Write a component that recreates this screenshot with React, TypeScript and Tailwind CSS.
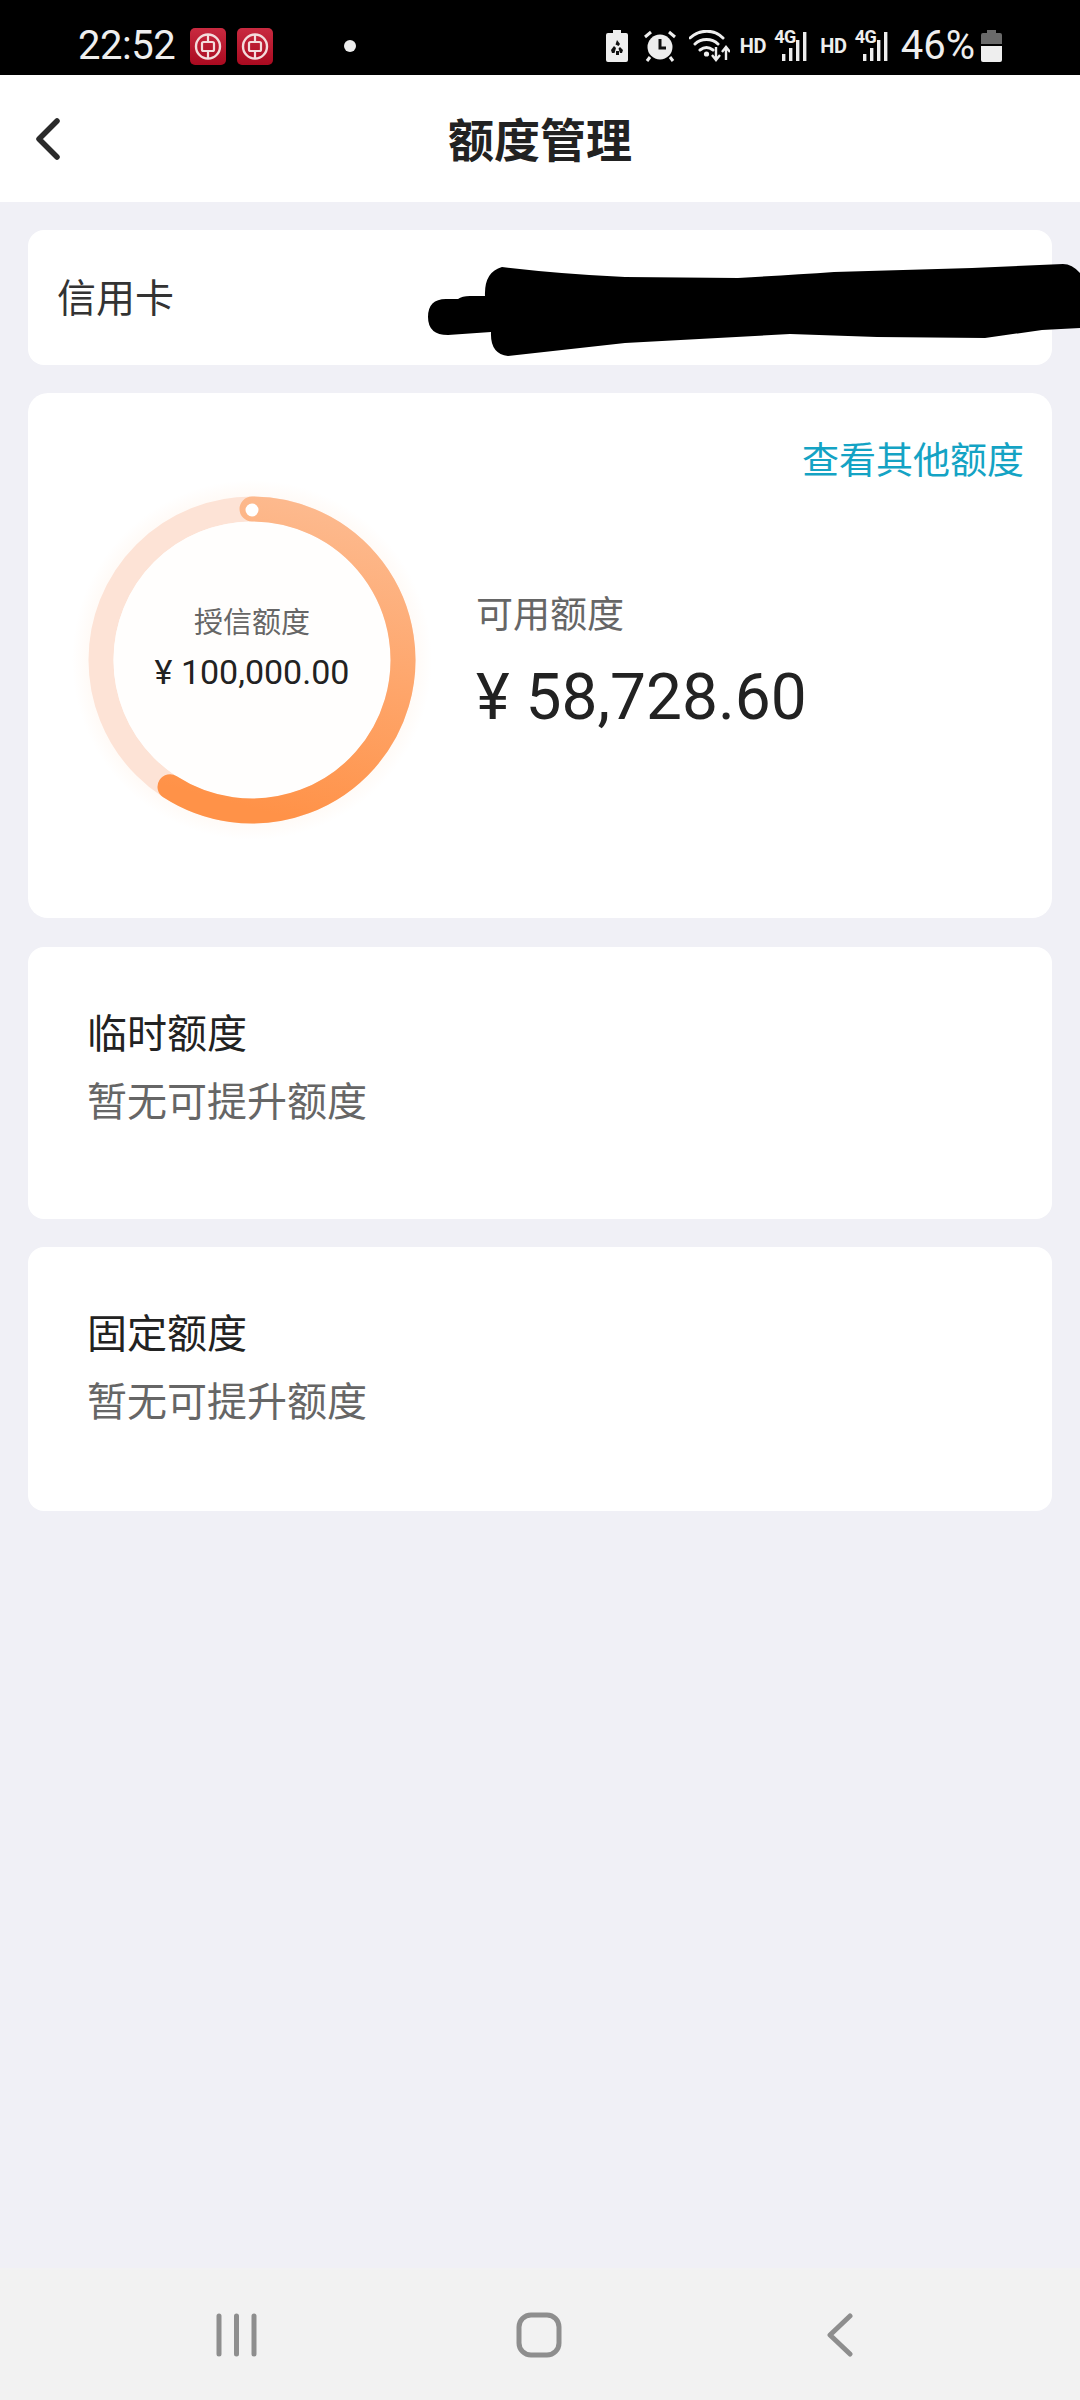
import React from 'react';

const FONT = 'font-["Roboto","Noto_Sans_CJK_SC",sans-serif]';

function BankIcon({ id }: { id: string }) {
  return (
    <svg width="36" height="37" viewBox="0 0 36 37">
      <defs>
        <linearGradient id={id} x1="0" y1="0" x2="0" y2="1">
          <stop offset="0" stopColor="#c92a40" />
          <stop offset="1" stopColor="#aa0a20" />
        </linearGradient>
      </defs>
      <rect x="0" y="0" width="36" height="37" rx="5" fill={`url(#${id})`} />
      <circle cx="18" cy="18.500" r="12" fill="none" stroke="#f3dcdc" strokeWidth="2.400" />
      <rect x="12" y="14" width="12" height="9" rx="1.500" fill="none" stroke="#f3dcdc" strokeWidth="2.200" />
      <path d="M18 7v7M18 23v7" stroke="#f3dcdc" strokeWidth="2.200" />
    </svg>
  );
}

function Signal() {
  return (
    <div className="relative w-[36px] h-[32px]">
      <span className="absolute left-0 top-[-2px] text-[18px] leading-[18px] font-bold tracking-[-0.5px] text-[#eeeeee]">4G</span>
      <svg className="absolute left-[8px] top-0" width="28" height="32" viewBox="0 0 28 32">
        <rect x="0" y="24" width="3.400" height="7" fill="#eee" />
        <rect x="7" y="18" width="3.400" height="13" fill="#eee" />
        <rect x="14" y="10" width="3.400" height="21" fill="#eee" />
        <rect x="21" y="2" width="3.400" height="29" fill="#eee" />
      </svg>
    </div>
  );
}

function StatusBar() {
  return (
    <div className="h-[75px] bg-black flex items-center pl-[78px] pr-[78px] pt-[17px] text-[#eeeeee] shrink-0">
      <span className="text-[40px] leading-none tracking-[-0.5px] w-[96px]">22:52</span>
      <div className="flex gap-[11px] ml-[16px]">
        <BankIcon id="bank-a" />
        <BankIcon id="bank-b" />
      </div>
      <span className="w-[12px] h-[12px] rounded-full bg-[#eeeeee] ml-[71px]" />
      <div className="flex-1" />
      <div className="flex items-center">
        <svg width="22" height="32" viewBox="0 0 22 32">
          <path d="M7 0h8v3h5a2 2 0 0 1 2 2v25a2 2 0 0 1-2 2H2a2 2 0 0 1-2-2V5a2 2 0 0 1 2-2h5z" fill="#eee" />
          <path d="M11 10l3 4-1.500 2-3-1.500zM5 20l3-4 2 2-1.500 5H6zM17 20l-3-3-1.500 1.500L14 23h2zM10 21h3v4h-3z" fill="#111" />
        </svg>
        <svg className="ml-[16px]" width="32" height="32" viewBox="0 0 32 32">
          <circle cx="16" cy="17" r="12.500" fill="#eee" />
          <path d="M16 9v9h6" fill="none" stroke="#111" strokeWidth="3" />
          <path d="M1 7l6-5M31 7l-6-5M6 27l-3 4M26 27l3 4" stroke="#eee" strokeWidth="3" />
        </svg>
        <svg className="ml-[13px]" width="41" height="32" viewBox="0 0 41 32">
          <path d="M1 8c10-9 24-9 33 0M6 14c6-6 17-6 23 0M11 20c4-3 9-3 13 0" fill="none" stroke="#eee" strokeWidth="3" strokeLinecap="round" />
          <circle cx="17.500" cy="24" r="2.600" fill="#eee" />
          <path d="M27 17v12M23 25l4 5 4-5M37 30V18M33 22l4-5 4 5" fill="none" stroke="#eee" strokeWidth="2.400" />
        </svg>
        <span className="ml-[10px] text-[20px] font-bold leading-none tracking-[-0.3px]">HD</span>
        <div className="ml-[8px]">
          <Signal />
        </div>
        <span className="ml-[10px] text-[20px] font-bold leading-none tracking-[-0.3px]">HD</span>
        <div className="ml-[8px]">
          <Signal />
        </div>
        <span className="ml-[10px] text-[40px] leading-none">46%</span>
        <svg className="ml-[6px]" width="21" height="32" viewBox="0 0 21 32">
          <path d="M6 0h9v3h4a2 2 0 0 1 2 2v9H0V5a2 2 0 0 1 2-2h4z" fill="#6a6a6a" />
          <path d="M0 16h21v14a2 2 0 0 1-2 2H2a2 2 0 0 1-2-2z" fill="#eee" />
        </svg>
      </div>
    </div>
  );
}

function NavBar() {
  return (
    <div className="h-[127px] bg-white flex items-center justify-center relative shrink-0">
      <svg className="absolute left-[33px] top-[42px]" width="28" height="44" viewBox="0 0 28 44">
        <path d="M24 4L6 22l18 18" fill="none" stroke="#2a2a2a" strokeWidth="5.500" strokeLinecap="round" strokeLinejoin="round" />
      </svg>
      <h1 className="text-[46px] leading-none font-bold text-[#222222] mt-[4px]">额度管理</h1>
    </div>
  );
}

function Ring() {
  return (
    <div className="relative w-[360px] h-[360px] shrink-0">
      <svg width="360" height="360" viewBox="0 0 360 360">
        <defs>
          <linearGradient id="arc" x1="0.6" y1="0" x2="0.4" y2="1">
            <stop offset="0" stopColor="#fdb98d" />
            <stop offset="1" stopColor="#ff9248" />
          </linearGradient>
          <radialGradient id="glow" cx="0.5" cy="0.5" r="0.5">
            <stop offset="0.72" stopColor="#fff8f3" />
            <stop offset="0.9" stopColor="#fffaf6" />
            <stop offset="1" stopColor="#ffffff" />
          </radialGradient>
        </defs>
        <circle cx="180" cy="180" r="180" fill="url(#glow)" />
        <circle cx="180" cy="180" r="151" fill="none" stroke="#fde3d6" strokeWidth="25" />
        <circle cx="180" cy="180" r="138.500" fill="#fffefd" />
        <path d="M180 29A151 151 0 1 1 98 306.800" fill="none" stroke="url(#arc)" strokeWidth="25" strokeLinecap="round" />
        <circle cx="180" cy="30" r="6.500" fill="#ffffff" />
      </svg>
      <div className="absolute inset-0 flex flex-col items-center pt-[126px]">
        <span className="text-[29px] leading-[34px] text-[#666666]">授信额度</span>
        <span className="text-[34px] leading-[40px] mt-[12px] text-[#222222]">¥ 100,000.00</span>
      </div>
    </div>
  );
}

function LimitCard({ title, height }: { title: string; height: string }) {
  return (
    <section className={`bg-white rounded-[16px] pl-[59px] pt-[60px] ${height}`}>
      <div className="text-[40px] leading-[56px] text-[#222222]">{title}</div>
      <div className="text-[40px] leading-[56px] mt-[12px] text-[#666666]">暂无可提升额度</div>
    </section>
  );
}

function BottomNav() {
  return (
    <div className="h-[132px] bg-[#f2f2f2] shrink-0 relative flex items-start justify-between pt-[45px] pl-[216px] pr-[227px]">
      <svg width="41" height="44" viewBox="0 0 41 44">
        <path d="M3 3v38M20.500 3v38M38 3v38" stroke="#8e8e8e" strokeWidth="5" strokeLinecap="round" />
      </svg>
      <svg width="46" height="46" viewBox="0 0 46 46" className="-mt-[1px] -ml-[6px]">
        <rect x="3" y="3" width="40" height="40" rx="12" fill="none" stroke="#8e8e8e" strokeWidth="5" />
      </svg>
      <svg width="26" height="44" viewBox="0 0 26 44">
        <path d="M23 3L3 22l20 19" fill="none" stroke="#8e8e8e" strokeWidth="5" strokeLinecap="round" strokeLinejoin="round" />
      </svg>
    </div>
  );
}

export default function App() {
  return (
    <div className={`w-[1080px] h-[2400px] flex flex-col bg-[#f0f0f6] overflow-hidden ${FONT}`}>
      <StatusBar />
      <NavBar />

      <main className="flex-1 flex flex-col px-[28px] pt-[28px]">
        {/* account row, number is scribbled out in the screenshot */}
        <section className="relative h-[135px] bg-white rounded-[16px] flex items-center pl-[29px] pt-[4px]">
          <span className="text-[39px] leading-none text-[#333333]">信用卡</span>
          <svg className="absolute left-[400px] top-[34px]" width="652" height="94" viewBox="428 264 652 94">
            <path
              d="M446 299H458Q462 296 470 296H485Q484 272 502 267Q560 274 625 277L738 278Q790 275 834 272L972 268L1063 264Q1072 264 1080 273V328L1042 330L985 338L877 337L790 334L625 343L508 356Q490 354 491 332L448 335Q428 335 428 317Q428 299 446 299Z"
              fill="#000000"
            />
          </svg>
        </section>

        {/* credit limit */}
        <section className="h-[525px] mt-[28px] bg-white rounded-[20px] pt-[47px]">
          <div className="text-right pr-[28px] text-[37px] leading-[44px] -mb-[4px] text-[#14a3c4]">查看其他额度</div>
          <div className="flex pl-[44px] items-start">
            <Ring />
            <div className="ml-[44px] pt-[114px]">
              <div className="text-[37px] leading-[44px] text-[#666666]">可用额度</div>
              <div className="text-[64px] leading-[76px] mt-[22px] text-[#222222]">¥ 58,728.60</div>
            </div>
          </div>
        </section>

        <LimitCard title="临时额度" height="h-[272px] mt-[29px]" />
        <LimitCard title="固定额度" height="h-[264px] mt-[28px]" />
      </main>

      <BottomNav />
    </div>
  );
}
